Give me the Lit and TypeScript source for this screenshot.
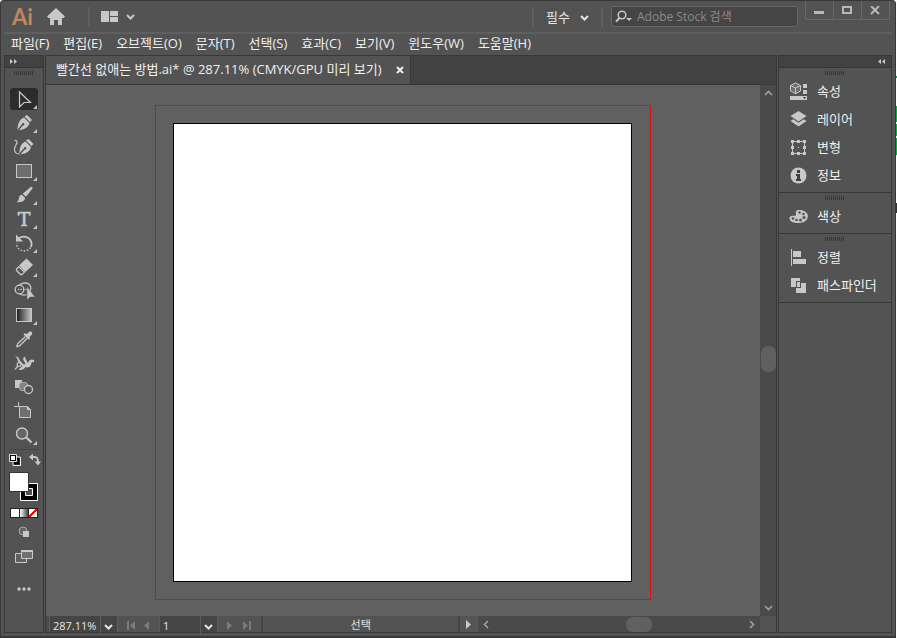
import { LitElement, html, css, svg, nothing } from "lit";
import { customElement, property, state } from "lit/decorators.js";
import { classMap } from "lit/directives/class-map.js";

const chevronDown = svg`<path d="M1 2l3.500 3.500L8 2" fill="none" stroke="currentColor" stroke-width="2"/>`;

interface Tool { label: string; flyout: boolean; art: unknown; }

// Each tool is drawn on a 28 x 22 board.
const TOOLS: Tool[] = [
  { label: "선택 도구", flyout: true, art: svg`<path d="M9.500 4v15l4.500-4.500h6.500z" fill="none" stroke="currentColor" stroke-width="1.200"/>` },
  { label: "펜 도구", flyout: true, art: svg`
    <path d="M17 3l5 5-2 2-5.500-5.500z" fill="currentColor"/>
    <path d="M14 5.500l5.500 5.500c-1 4-4 6.500-10 7l-1.200 1 4.500-5.500a1.300 1.300 0 1 0-1-1L7 18l.500-1.500C8 11 10 7 14 5.500z" fill="currentColor"/>` },
  { label: "곡률 도구", flyout: false, art: svg`
    <path d="M18.500 3l5 5-2 2-5.500-5.500z" fill="currentColor"/>
    <path d="M15.500 5.500l5.500 5.500c-1 4-4 6.500-9 7l-1.700.500 4.500-5a1.300 1.300 0 1 0-1-1l-4.800 5 .500-2c.500-5 2-8.500 6-10z" fill="currentColor"/>
    <path d="M4.500 4.500C7.500 4 7.500 6.500 6 9S3.500 14 5.500 16.500c1 1.200 2.500 1.500 4 1.500" fill="none" stroke="currentColor" stroke-width="1.200"/>` },
  { label: "사각형 도구", flyout: true, art: svg`<rect x="6.500" y="4.500" width="15" height="13" fill="#6e6e6e" stroke="currentColor"/>` },
  { label: "페인트브러쉬 도구", flyout: true, art: svg`
    <path d="M22.200 3.200c.600.600.300 1.300-.300 2.100L16 12.800 12.700 9.700l7.400-6.200c.800-.600 1.500-.900 2.100-.300z" fill="currentColor"/>
    <path d="M11.800 10.800l3.200 3c.300 3-3.500 5.200-8.500 4.200 2.200-.700 2-2 2.500-4.500.300-1.500 1.500-2.500 2.800-2.700z" fill="currentColor"/>` },
  { label: "문자 도구", flyout: true, art: svg`<text x="14" y="18" text-anchor="middle" class="type" fill="currentColor" stroke="currentColor" stroke-width=".6">T</text>` },
  { label: "회전 도구", flyout: true, art: svg`
    <path d="M8 7c4-4 12-3 13.500 4 .300 1.500 0 3-.500 4" fill="none" stroke="currentColor" stroke-width="1.800"/>
    <path d="M6 2.500v7h7z" fill="currentColor"/>
    <path d="M20.500 15.500c-3 5-11.500 4.500-13.500-1.500-.300-1-.400-2 0-3" fill="none" stroke="currentColor" stroke-width="1.500" stroke-dasharray="1.500 1.700"/>` },
  { label: "지우개 도구", flyout: true, art: svg`
    <path d="M16.500 2.500l6.500 6.500-7.500 7L9 9.500z" fill="currentColor"/>
    <path d="M8.800 10.800L6.500 13v1.500l4 4H12l2.500-2.500z" fill="none" stroke="currentColor" stroke-width="1.300"/>` },
  { label: "도형 구성 도구", flyout: false, art: svg`
    <path d="M9 5.500C12 2 19 2 20.500 6.500c.500 2 .300 4-.500 5.500M9.500 13.500c2 1.700 5 2 7.500 1" fill="none" stroke="currentColor" stroke-width="1.300"/>
    <circle cx="9.500" cy="9.500" r="4.300" fill="none" stroke="currentColor" stroke-width="1.300"/>
    <path d="M8 9.500h9" stroke="currentColor" stroke-width="1.300" stroke-dasharray="1.300 1.200"/>
    <path d="M17 6.500V20l3-3h5z" fill="currentColor" stroke="#535353" stroke-width=".5"/>` },
  { label: "그레이디언트 도구", flyout: true, art: svg`
    <defs><linearGradient id="ramp"><stop offset="0" stop-color="#1c1c1c"/><stop offset="1" stop-color="#c8c8c8"/></linearGradient></defs>
    <rect x="6.500" y="4.500" width="15" height="13" fill="url(#ramp)" stroke="currentColor"/>` },
  { label: "스포이드 도구", flyout: false, art: svg`
    <path d="M15.500 8.500L8 15.500c-.800 1-.500 1.500-1.300 2.800l.500.500c1.300-.800 2-.500 2.800-1.300l7.200-7.300" fill="none" stroke="currentColor" stroke-width="1.300"/>
    <path d="M17 6c1-1.500 2.500-3 4-2.500 1.800.600 1.500 2.500.500 3.500L19.500 9l.500 1.500-1.200 1.200-5.300-5.200 1.200-1.200z" fill="currentColor"/>` },
  { label: "변형 도구", flyout: false, art: svg`
    <path d="M5 4.500c2.500-.500 4 1 4.500 3.500l3.500 4 2 .500c1-1-.500-2.500-1.500-4-1-2 0-4 2-3.800-1 1.300.500 2.300 1 3.800.500 1.300.800 2.500 1.800 2 1-2.500 2.700-4 5.700-2.500v2.500c-2-1-2.700 0-3 2-.700 3-3.500 3.500-5.500 2.500-1.500 2.500-4.500 3.500-7 2.500l4-3.500-4.500-4.500C7.500 7 7 5.500 5 4.500z" fill="currentColor"/>
    <circle cx="9" cy="12.500" r="1.900" fill="#535353" stroke="currentColor" stroke-width="1.200"/>
    <path d="M5 17.500l3-3.500" stroke="currentColor" stroke-width="1.300"/>` },
  { label: "블렌드 도구", flyout: false, art: svg`
    <path d="M5 4h7v8H5z" fill="currentColor"/>
    <rect x="9.500" y="6.500" width="8" height="8" rx="2.500" fill="#858585" stroke="#a8a8a8"/>
    <circle cx="18.500" cy="13.500" r="4" fill="#535353" stroke="currentColor" stroke-width="1.300"/>` },
  { label: "대지 도구", flyout: false, art: svg`
    <path d="M8.500 2v4M4 6.500h5" stroke="currentColor"/>
    <path d="M9.500 6.500h8l3 3v8h-11z" fill="#707070" stroke="currentColor"/>
    <path d="M17 6v4h4z" fill="currentColor"/>` },
  { label: "돋보기 도구", flyout: true, art: svg`
    <circle cx="12" cy="9.500" r="5.500" fill="#666" stroke="currentColor" stroke-width="1.400"/>
    <path d="M16.500 13.500l5 5" stroke="currentColor" stroke-width="2.200"/>` },
];

const PANELS: { label: string; art: unknown }[][] = [
  [
    { label: "속성", art: svg`
      <path d="M6.500 1l5 2.500v5.500l-5 2.700-5-2.700V3.500z" fill="#6e6e6e" stroke="currentColor"/>
      <path d="M1.500 3.500l5 2.500 5-2.500M6.500 6v5.500" fill="none" stroke="currentColor"/>
      <path d="M14 2h4v4h-4zM14 8h4v4h-4zM1 14h17v4H1z" fill="currentColor"/>
      <path d="M14 15h3l-1.500 2z" fill="#3a3a3a"/>` },
    { label: "레이어", art: svg`
      <path d="M9.500 1l8 5-8 5.500-8-5.500z" fill="currentColor"/>
      <path d="M1.500 11l2.800-1.800 5.200 3.500 5.200-3.500 2.800 1.800-8 5.500z" fill="currentColor"/>` },
    { label: "변형", art: svg`
      <path d="M3.500 3.500h12v12h-12z" fill="none" stroke="currentColor"/>
      <path d="M2 2h3v3H2zM8 2h3v3H8zM14 2h3v3h-3zM2 8h3v3H2zM14 8h3v3h-3zM2 14h3v3H2zM8 14h3v3H8zM14 14h3v3h-3zM9 9h1v1H9z" fill="currentColor"/>` },
    { label: "정보", art: svg`
      <circle cx="9.500" cy="9.500" r="8" fill="currentColor"/>
      <path d="M8 4h3v3H8zM7 8h4v5h1v2H7v-2h1v-3H7z" fill="#3f3f3f"/>` },
  ],
  [
    { label: "색상", art: svg`
      <path d="M10 3c5 0 9 2.500 8.800 6.500C18.500 14 14 16 9 16c-5 0-8.500-2-8.500-4.500C.500 9.500 2 8.500 4 8.700c2 .300 3.500 0 3-1.700C6.400 5 7 3 10 3z" fill="currentColor"/>
      <g fill="#535353"><circle cx="10.500" cy="5.500" r="1.300"/><circle cx="14.500" cy="7" r="1.300"/><circle cx="15" cy="10.500" r="1.600"/><circle cx="11.500" cy="13" r="1.500"/><circle cx="7.500" cy="13" r="1.300"/><circle cx="4" cy="11.500" r="1.300"/></g>` },
  ],
  [
    { label: "정렬", art: svg`
      <path d="M2.500 1v17" stroke="currentColor"/><path d="M4 3h8v6H4zM4 11h13v5H4z" fill="currentColor"/>` },
    { label: "패스파인더", art: svg`
      <path d="M2 2h9v3H7v6H2zM12 7h5v10H7v-5h5z" fill="currentColor"/>
      <path d="M8 6h3v5H8z" fill="currentColor"/>` },
  ],
];

@customElement("tool-bar")
class ToolBar extends LitElement {
  @state() active = 0;

  static styles = css`
    :host { display: flex; flex-direction: column; align-items: center; background: #535353; border: 1px solid #383838; min-height: 0; overflow: hidden; color: #c8c8c8; }
    button { appearance: none; border: 0; padding: 0; margin: 0; background: none; color: inherit; display: block; flex: none; }
    svg { display: block; }
    .head { align-self: stretch; box-sizing: border-box; height: 12px; padding: 2px 4px; background: #424242; border-bottom: 1px solid #383838; }
    .grip { flex: none; width: 20px; height: 4px; margin: 3px 0 13px; background: repeating-linear-gradient(90deg, #383838 0 1px, transparent 1px 2px); }
    .tools { display: grid; gap: 2px; }
    .tool { border-radius: 3px; }
    .tool.active { background: #2c2c2c; }
    .type { font: 19px "DejaVu Serif", serif; }
    .rule { flex: none; width: 30px; height: 1px; margin: 3px 0; background: #444; }
    .row { display: flex; justify-content: space-between; width: 32px; margin-left: 2px; }
    .swatches { margin: 6px 0; }
    .mini { display: flex; border: 1px solid #222; gap: 1px; background: #222; }
    .chip { width: 8px; height: 8px; background: #fff; }
    .chip.ramp { background: linear-gradient(90deg, #fff, #444); }
    .chip.none { background: linear-gradient(135deg, #fff 38%, #f00 38% 62%, #fff 62%); }
    .draw { margin-top: 8px; }
    .screen { margin-top: 11px; }
    .more { margin-top: 20px; }
  `;

  render() {
    return html`
      <button class="head" aria-label="도구 패널 확장"><svg width="9" height="7"><path d="M1 1l3 2.500L1 6zM5 1l3 2.500L5 6z" fill="currentColor"/></svg></button>
      <div class="grip"></div>
      <div class="tools">
        ${TOOLS.map((t, i) => html`
          <button class=${classMap({ tool: true, active: i === this.active })} aria-label=${t.label} @click=${() => (this.active = i)}>
            <svg width="28" height="22" viewBox="0 0 28 22">${t.art}${t.flyout ? svg`<path d="M27 17v4h-4z" fill="currentColor"/>` : nothing}</svg>
          </button>`)}
      </div>
      <div class="rule"></div>
      <div class="row">
        <button aria-label="초기값 칠과 선"><svg width="12" height="13">
          <path d="M5.500 5.500h4v5h-4z" fill="#535353" stroke="#000" stroke-width="2"/><path d="M4 4h7.500v8.500H4z" fill="none" stroke="#eee"/>
          <path d="M.500 1.500h7v7h-7z" fill="#000" stroke="#ddd"/><path d="M2 3h4v4H2z" fill="#fff"/></svg></button>
        <button aria-label="칠과 선 교체"><svg width="12" height="13"><path d="M4 4h1.500c3 0 3.500 1.500 3.500 5" fill="none" stroke="currentColor" stroke-width="2"/><path d="M0 4l4-3.500v7zM5.500 8.500H12L9 12.500z" fill="currentColor"/></svg></button>
      </div>
      <button class="swatches" aria-label="칠과 선"><svg width="30" height="30">
        <path d="M11.500 11.500h17v17h-17z" fill="#000" stroke="#fff"/><path d="M16.500 16.500h7v7h-7z" fill="#535353" stroke="#fff"/>
        <path d="M.5.5h19v19H.5z" fill="#fff" stroke="#333"/></svg></button>
      <div class="mini">
        <button class="chip" aria-label="색상"></button>
        <button class="chip ramp" aria-label="그레이디언트"></button>
        <button class="chip none" aria-label="없음"></button>
      </div>
      <button class="draw" aria-label="그리기 모드"><svg width="12" height="12"><circle cx="5" cy="5" r="4" fill="#666" stroke="#a8a8a8"/><path d="M5 5h6v6H5z" fill="currentColor"/></svg></button>
      <button class="screen" aria-label="화면 모드"><svg width="18" height="14"><path d="M.5 4.500h11v9H.5z" fill="#606060" stroke="currentColor"/><path d="M6.500 1.500h11v8h-11z" fill="#707070" stroke="currentColor"/><path d="M6 1h12v2H6z" fill="currentColor"/></svg></button>
      <button class="more" aria-label="도구 모음 편집"><svg width="16" height="12"><g fill="currentColor"><circle cx="3" cy="6" r="1.700"/><circle cx="8" cy="6" r="1.700"/><circle cx="13" cy="6" r="1.700"/></g></svg></button>
    `;
  }
}

@customElement("panel-dock")
class PanelDock extends LitElement {
  static styles = css`
    :host { display: block; background: #535353; border: 1px solid #383838; color: #c8c8c8; }
    button { appearance: none; border: 0; padding: 0; background: none; color: inherit; font: inherit; }
    svg { display: block; flex: none; }
    .head { display: flex; justify-content: flex-end; width: 100%; height: 12px; box-sizing: border-box; padding: 2px 5px; background: #424242; border-bottom: 1px solid #383838; }
    .group { padding: 3px 0; border-bottom: 1px solid #383838; }
    .grip { width: 20px; height: 4px; margin: 0 auto 2px; background: repeating-linear-gradient(90deg, #383838 0 1px, transparent 1px 2px); }
    .item { display: flex; align-items: center; gap: 9px; width: 100%; height: 28px; padding-left: 10px; white-space: nowrap; }
    .label { color: #f0f0f0; }
  `;

  render() {
    return html`
      <button class="head" aria-label="패널 확장"><svg width="9" height="7"><path d="M4 1L1 3.500 4 6zM8 1L5 3.500 8 6z" fill="currentColor"/></svg></button>
      ${PANELS.map((g) => html`
        <div class="group"><div class="grip"></div>
          ${g.map((p) => html`<button class="item"><svg width="19" height="19" viewBox="0 0 19 19">${p.art}</svg><span class="label">${p.label}</span></button>`)}
        </div>`)}
    `;
  }
}

@customElement("drop-down")
class DropDown extends LitElement {
  @property() label = "";
  @property() value = "";
  @property({ type: Boolean, reflect: true }) boxed = false;

  static styles = css`
    :host { display: grid; align-items: center; color: #e6e6e6; }
    select { grid-area: 1 / 1; appearance: none; border: 0; margin: 0; padding: 0 18px 0 0; height: 100%; width: 100%; background: none; color: inherit; font: inherit; border-radius: 0; }
    svg { grid-area: 1 / 1; justify-self: end; margin-top: 3px; pointer-events: none; }
    :host([boxed]) { background: #454545; font-size: 11px; border: solid #5c5c5c; border-width: 0 1px; }
    :host([boxed]) select { padding: 2px 18px 0 3px; background: linear-gradient(#5c5c5c, #5c5c5c) right 16px top / 1px 100% no-repeat; }
    :host([boxed]) svg { margin-right: 4px; }
  `;

  render() {
    return html`<select aria-label=${this.label}><option>${this.value}</option></select><svg width="9" height="8">${chevronDown}</svg>`;
  }
}

@customElement("document-view")
class DocumentView extends LitElement {
  static styles = css`
    :host { display: grid; grid-template: 28px 1px minmax(0, 1fr) 16px / minmax(0, 1fr) 16px; background: #4a4a4a; border: 1px solid #383838; min-height: 0; }
    button { appearance: none; border: 0; padding: 0; background: none; color: inherit; font: inherit; display: grid; place-items: center; }
    svg { display: block; }
    .tabs { grid-column: 1 / 3; display: flex; background: #424242; }
    .tab { display: flex; align-items: center; gap: 14px; padding: 0 6px 2px 10px; background: #535353; border-right: 1px solid #383838; color: #f0f0f0; white-space: nowrap; }
    .tab button { padding-top: 2px; }
    .line { grid-column: 1 / 3; background: #383838; }
    .canvas { display: flex; justify-content: center; min-height: 0; min-width: 0; padding: 20px 0 16px; background: #606060; overflow: hidden; }
    .bleed { box-sizing: border-box; height: 100%; aspect-ratio: 496 / 495; padding: 17px 18px 17px 17px; border: 1px solid #e80c0c; display: flex; }
    .artboard { flex: 1; border: 1px solid #000; background: #fff; }
    .vscroll { display: flex; flex-direction: column; align-items: center; justify-content: space-between; color: #a0a0a0; padding: 4px 0; }
    .vthumb { width: 15px; height: 26px; border-radius: 7px; background: #606060; margin: 249px 0 auto; }
    .hscroll { flex: 7 1 0; display: flex; align-items: center; color: #a0a0a0; padding: 0 4px; }
    .hthumb { width: 26px; height: 15px; border-radius: 7px; background: #606060; margin: 0 auto 0 136px; }
    .bar { display: flex; min-width: 0; background: #4a4a4a; }
    .zoom { width: 67px; margin-left: 3px; }
    .page { width: 57px; }
    .nav { display: flex; align-items: center; justify-content: center; gap: 8px; width: 41px; padding-top: 2px; box-sizing: border-box; background: #535353; color: #7a7a7a; }
    .nav.next { gap: 10px; width: 43px; }
    .status { flex: 5 1 0; display: grid; place-items: center; background: #535353; border: solid #444; border-width: 0 2px; padding-top: 2px; color: #e0e0e0; font-size: 11px; line-height: 14px; }
    .play { width: 18px; background: #555; color: #c8c8c8; }
    .corner { background: #535353; }
  `;

  render() {
    return html`
      <div class="tabs"><div class="tab"><span>빨간선 없애는 방법.ai* @ 287.11% (CMYK/GPU 미리 보기)</span>
        <button aria-label="문서 닫기"><svg width="8" height="8"><path d="M1 1l6 6M7 1L1 7" stroke="currentColor" stroke-width="2"/></svg></button></div></div>
      <div class="line"></div>
      <div class="canvas"><div class="bleed"><div class="artboard"></div></div></div>
      <div class="vscroll">
        <button aria-label="위로"><svg width="9" height="8"><path d="M1 6l3.500-3.500L8 6" fill="none" stroke="currentColor" stroke-width="1.600"/></svg></button>
        <div class="vthumb"></div>
        <button aria-label="아래로"><svg width="9" height="8"><path d="M1 2l3.500 3.500L8 2" fill="none" stroke="currentColor" stroke-width="1.600"/></svg></button>
      </div>
      <div class="bar">
        <drop-down boxed class="zoom" label="확대/축소" value="287.11%"></drop-down>
        <div class="nav">
          <button aria-label="처음"><svg width="9" height="9"><path d="M0 0h2v9H0zM8 0v9L3 4.500z" fill="currentColor"/></svg></button>
          <button aria-label="이전"><svg width="6" height="9"><path d="M5 0v9L0 4.500z" fill="currentColor"/></svg></button>
        </div>
        <drop-down boxed class="page" label="대지" value="1"></drop-down>
        <div class="nav next">
          <button aria-label="다음"><svg width="6" height="9"><path d="M0 0v9l5-4.500z" fill="currentColor"/></svg></button>
          <button aria-label="마지막"><svg width="9" height="9"><path d="M6 0h2v9H6zM0 0v9l5-4.500z" fill="currentColor"/></svg></button>
        </div>
        <div class="status">선택</div>
        <button class="play" aria-label="상태 메뉴"><svg width="6" height="9"><path d="M0 0v9l5-4.500z" fill="currentColor"/></svg></button>
        <div class="hscroll">
          <button aria-label="왼쪽으로"><svg width="8" height="9"><path d="M6 1L2.500 4.500 6 8" fill="none" stroke="currentColor" stroke-width="1.600"/></svg></button>
          <div class="hthumb"></div>
          <button aria-label="오른쪽으로"><svg width="8" height="9"><path d="M2 1l3.500 3.500L2 8" fill="none" stroke="currentColor" stroke-width="1.600"/></svg></button>
        </div>
      </div>
      <div class="corner"></div>
    `;
  }
}

const MENUS = ["파일(F)", "편집(E)", "오브젝트(O)", "문자(T)", "선택(S)", "효과(C)", "보기(V)", "윈도우(W)", "도움말(H)"];

@customElement("app-root")
class AppRoot extends LitElement {
  static styles = css`
    :host { display: flex; height: 100vh; background: #fff; font: 13px/16px "Open Sans", "Noto Sans CJK KR", sans-serif; color: #e6e6e6; }
    button { appearance: none; border: 0; padding: 0; background: none; color: inherit; font: inherit; }
    svg { display: block; }
    .window { flex: 1; min-width: 0; box-sizing: border-box; display: flex; flex-direction: column; padding: 0 3px 3px; background: #535353; border: 1px solid #383838; border-bottom-width: 2px; border-radius: 4px 4px 0 0; }
    .behind { width: 1px; background: linear-gradient(#fff 76px, #00b140 76px 78px, #fff 78px 106px, #00b140 106px 122px, #fff 122px 124px, #00b140 124px 136px, #fff 136px 138px, #00b140 138px 155px, #fff 155px 203px, #333 203px 213px, #fff 213px); }
    .title { display: flex; align-items: center; height: 31px; flex: none; border-bottom: 2px solid #5f5f5f; }
    .logo { margin: 0 14px 0 8px; font: bold 22px/28px Lato, sans-serif; color: #c08660; }
    .divider { width: 2px; height: 20px; background: #5f5f5f; }
    .home { margin-right: 23px; color: #c8c8c8; }
    .arrange { display: flex; align-items: center; gap: 8px; margin-left: 11px; color: #c8c8c8; }
    .spacer { flex: 1; }
    .workspace { width: 43px; margin: 0 12px; }
    .search { box-sizing: border-box; display: flex; align-items: center; gap: 4px; flex: 0 1 187px; height: 21px; margin: 0 7px 0 8px; padding: 0 4px 0 3px; background: #454545; border: 1px solid #666; border-radius: 3px; color: #c8c8c8; font-size: 12px; }
    .search input { flex: 1; min-width: 0; border: 0; padding: 0; outline: 0; background: none; color: #e6e6e6; font: inherit; }
    .search input::placeholder { color: #8a8a8a; opacity: 1; }
    .controls { align-self: flex-start; box-sizing: border-box; width: 85px; display: flex; margin-right: 2px; border: 1px solid #686868; border-top: 0; border-radius: 0 0 3px 3px; }
    .control { display: grid; place-items: center; flex: 1; height: 18px; color: #b8b8b8; }
    .control + .control { border-left: 1px solid #686868; }
    .menu { display: flex; align-items: center; gap: 14px; flex: none; box-sizing: border-box; height: 21px; padding: 0 0 4px 7px; white-space: nowrap; color: #f0f0f0; }
    .main { flex: 1; min-height: 0; display: grid; grid-template: minmax(0, 1fr) / 40px minmax(0, 1fr) 114px; gap: 1px; }
  `;

  render() {
    return html`
      <div class="window">
        <header class="title">
          <span class="logo">Ai</span>
          <button class="home" aria-label="홈"><svg width="18" height="17"><path d="M9 0l9 8.500-1.500 1.500H15v7h-4v-5H7v5H3v-7H1.500L0 8.500z" fill="currentColor"/></svg></button>
          <div class="divider"></div>
          <button class="arrange" aria-label="문서 배치"><svg width="17" height="11"><path d="M0 0h8v11H0zM9 0h8v5H9zM9 6h8v5H9z" fill="currentColor"/></svg><svg width="9" height="8">${chevronDown}</svg></button>
          <div class="spacer"></div>
          <div class="divider"></div>
          <drop-down class="workspace" label="작업 영역" value="필수"></drop-down>
          <div class="divider"></div>
          <label class="search">
            <svg width="18" height="14"><circle cx="7" cy="5" r="3.800" fill="none" stroke="currentColor" stroke-width="1.500"/><path d="M4.500 8L1 11.500" stroke="currentColor" stroke-width="2"/><path d="M11 8h6l-3 3z" fill="currentColor"/></svg>
            <input type="search" placeholder="Adobe Stock 검색" aria-label="Adobe Stock 검색">
          </label>
          <div class="controls">
            <button class="control" aria-label="최소화"><svg width="11" height="9"><path d="M0 5h10v3H0z" fill="currentColor"/></svg></button>
            <button class="control" aria-label="최대화"><svg width="11" height="9"><path d="M1 1h8v6H1z" fill="none" stroke="currentColor" stroke-width="2"/></svg></button>
            <button class="control" aria-label="닫기"><svg width="11" height="9"><path d="M1 0l8 8M9 0L1 8" stroke="currentColor" stroke-width="2"/></svg></button>
          </div>
        </header>
        <nav class="menu">${MENUS.map((m) => html`<button>${m}</button>`)}</nav>
        <div class="main"><tool-bar></tool-bar><document-view></document-view><panel-dock></panel-dock></div>
      </div>
      <div class="behind"></div>
    `;
  }
}
